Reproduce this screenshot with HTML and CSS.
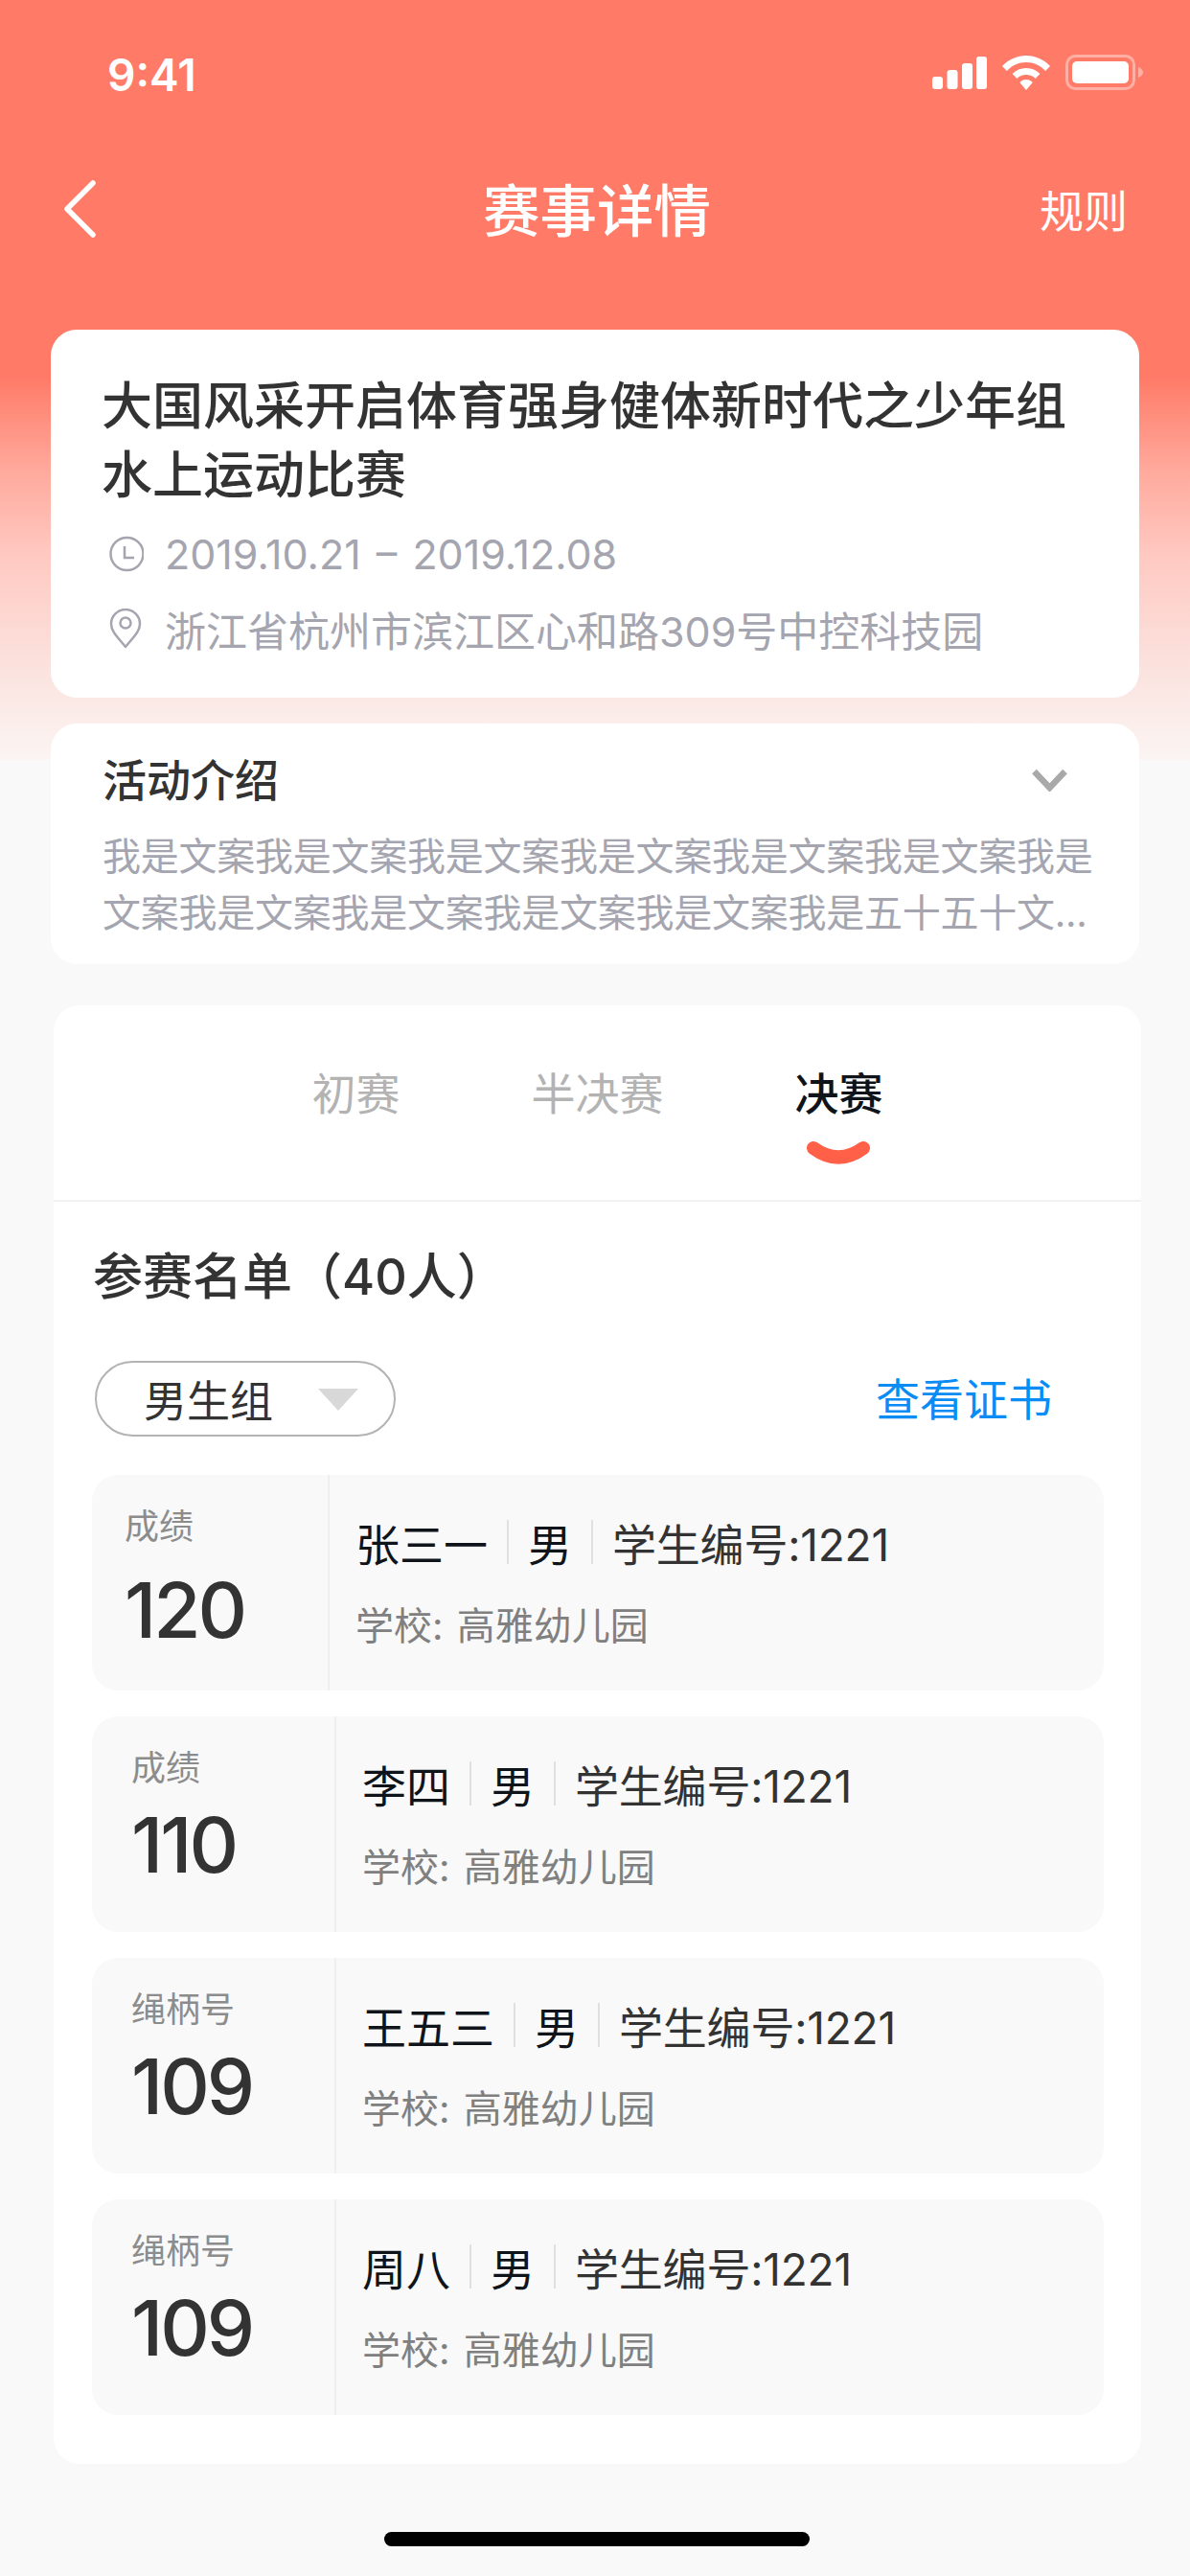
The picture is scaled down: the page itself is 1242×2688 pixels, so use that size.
FILE: index.html
```html
<!DOCTYPE html>
<html lang="zh">
<head>
<meta charset="utf-8">
<title>赛事详情</title>
<link rel="stylesheet" href="styles.css">
</head>
<body>
<div class="page">
  <div class="status">
    <span class="time">9:41</span>
    <div class="status-icons">
      <svg width="57" height="34" viewBox="0 0 57 34" class="signal"><rect x="0" y="21" width="11" height="13" rx="3"/><rect x="15.500" y="14" width="11" height="20" rx="3"/><rect x="31" y="7" width="11" height="27" rx="3"/><rect x="46" y="0" width="11" height="34" rx="3"/></svg>
      <svg width="50" height="36" viewBox="0 0 52 36" class="wifi" preserveAspectRatio="none"><path d="M26 0C16 0 7 4 0 11l5 5C11 10 18 7 26 7s15 3 21 9l5-5C45 4 36 0 26 0z"/><path d="M26 13c-6 0-11 2-15 6l5 5c3-3 6-4 10-4s7 1 10 4l5-5c-4-4-9-6-15-6z"/><path d="M26 25c-3 0-5 1-7 3l7 8 7-8c-2-2-4-3-7-3z"/></svg>
      <svg width="81" height="37" viewBox="0 0 81 37" class="battery"><rect x="1.500" y="1.500" width="70" height="34" rx="9" fill="none" stroke="#fff" stroke-opacity=".4" stroke-width="3"/><rect x="7" y="7" width="59" height="23" rx="5" fill="#fff"/><path d="M76 13c3 1 5 3 5 5.500s-2 4.500-5 5.500z" fill="#fff" fill-opacity=".4"/></svg>
    </div>
  </div>
  <header class="nav">
    <svg class="back" width="36" height="60" viewBox="0 0 36 60"><path d="M31 3 4 30l27 27" fill="none" stroke="#fff" stroke-width="5.500" stroke-linecap="round" stroke-linejoin="round"/></svg>
    <h1 class="nav-title">赛事详情</h1>
    <span class="nav-rule">规则</span>
  </header>

  <section class="card info">
    <h2 class="info-title">大国风采开启体育强身健体新时代之少年组<br>水上运动比赛</h2>
    <div class="meta meta-date">
      <svg width="38" height="38" viewBox="0 0 38 38" class="meta-icon"><circle cx="20.500" cy="19" r="17" fill="none" stroke="#a5a5b0" stroke-width="2.500"/><path d="M18 11v12h10" fill="none" stroke="#a5a5b0" stroke-width="2.500"/></svg>
      <span class="date-text">2019.10.21 – 2019.12.08</span>
    </div>
    <div class="meta">
      <svg width="38" height="42" viewBox="0 0 38 42" class="meta-icon"><path d="M19 40C11 30 4 24 4 16a15 15 0 0 1 30 0c0 8-7 14-15 24z" fill="none" stroke="#a5a5b0" stroke-width="2.500" stroke-linejoin="round"/><circle cx="19" cy="15" r="5.500" fill="none" stroke="#a5a5b0" stroke-width="2.500"/></svg>
      <span>浙江省杭州市滨江区心和路309号中控科技园</span>
    </div>
  </section>

  <section class="card intro">
    <div class="intro-head">
      <h3 class="intro-title">活动介绍</h3>
      <svg width="37" height="24" viewBox="0 0 37 24"><path d="M2.500 3l16 17 16-17" fill="none" stroke="#a9a9a9" stroke-width="6.500"/></svg>
    </div>
    <p class="intro-text">我是文案我是文案我是文案我是文案我是文案我是文案我是<br>文案我是文案我是文案我是文案我是文案我是五十五十文...</p>
  </section>

  <section class="panel">
    <div class="tabs">
      <span class="tab">初赛</span>
      <span class="tab">半决赛</span>
      <span class="tab tab-active">决赛
        <svg class="tab-mark" width="66" height="24" viewBox="0 0 66 24"><path d="M7 7Q33 26 59 7" fill="none" stroke="#ff6047" stroke-width="14" stroke-linecap="round"/></svg>
      </span>
    </div>
    <div class="panel-body">
      <h3 class="list-title">参赛名单（40人）</h3>
      <div class="filter">
        <div class="select"><span>男生组</span><i class="caret"></i></div>
        <a class="cert">查看证书</a>
      </div>
      <div class="rows">
        <div class="row">
          <div class="score"><span class="score-label">成绩</span><span class="score-num">120</span></div>
          <div class="person">
            <div class="person-line"><b>张三一</b><i></i><b>男</b><i></i><span class="person-id">学生编号:1221</span></div>
            <div class="school">学校: 高雅幼儿园</div>
          </div>
        </div>
        <div class="row row-wide">
          <div class="score"><span class="score-label">成绩</span><span class="score-num">110</span></div>
          <div class="person">
            <div class="person-line"><b>李四</b><i></i><b>男</b><i></i><span class="person-id">学生编号:1221</span></div>
            <div class="school">学校: 高雅幼儿园</div>
          </div>
        </div>
        <div class="row row-wide">
          <div class="score"><span class="score-label">绳柄号</span><span class="score-num">109</span></div>
          <div class="person">
            <div class="person-line"><b>王五三</b><i></i><b>男</b><i></i><span class="person-id">学生编号:1221</span></div>
            <div class="school">学校: 高雅幼儿园</div>
          </div>
        </div>
        <div class="row row-wide">
          <div class="score"><span class="score-label">绳柄号</span><span class="score-num">109</span></div>
          <div class="person">
            <div class="person-line"><b>周八</b><i></i><b>男</b><i></i><span class="person-id">学生编号:1221</span></div>
            <div class="school">学校: 高雅幼儿园</div>
          </div>
        </div>
      </div>
    </div>
  </section>
  <div class="home-bar"></div>
</div>
</body>
</html>
```
FILE: styles.css
```css
* { box-sizing: border-box; margin: 0; padding: 0; }
html, body { width: 1242px; height: 2688px; overflow: hidden; }
body {
  font-family: Inter, "Noto Sans CJK SC", "Noto Sans", sans-serif;
  background: #f9f9f9;
  color: #333;
}
.page {
  width: 1242px;
  height: 2688px;
  display: flex;
  flex-direction: column;
  align-items: flex-start;
  background: linear-gradient(#ff7b68 0, #ff7b68 395px, #ffa99c 490px, #ffc9c2 580px, #fbe3df 700px, #fbf5f3 793px, #f9f9f9 793px);
}
.status {
  width: 100%;
  height: 150px;
  padding: 54px 49px 0 112px;
  display: flex;
  justify-content: space-between;
  align-items: flex-start;
}
.time { font-size: 46px; line-height: 48px; font-weight: 600; color: #fff; }
.status-icons { display: flex; align-items: center; gap: 16px; padding-top: 3px; }
.signal, .wifi { fill: #fff; }
.nav {
  width: 100%;
  height: 194px;
  padding: 0 66px;
  display: flex;
  align-items: flex-start;
  justify-content: space-between;
  position: relative;
}
.back { margin-top: 38px; }
.nav-title {
  position: absolute;
  left: 4px;
  right: 0;
  top: 40px;
  text-align: center;
  font-size: 59.5px;
  line-height: 60px;
  font-weight: 500;
  color: #fff;
}
.nav-rule { font-size: 46px; line-height: 60px; color: #fff; margin-top: 40px; margin-right: -1px; }
.card { background: #fff; border-radius: 27px; margin-left: 53px; width: 1136px; }
.info { height: 384px; padding: 44px 54px 0 53px; }
.info-title { font-size: 53px; line-height: 72px; font-weight: 500; color: #333; margin-bottom: 11px; }
.meta {
  display: flex;
  align-items: center;
  gap: 22px;
  height: 80px;
  font-size: 43px;
  color: #a5a5b0;
  padding-left: 6px;
}
.meta-icon { flex: none; width: 38px; }
.meta-date { height: 70px; margin-bottom: 3px; }
.date-text { word-spacing: 4px; }
.intro { height: 251px; margin-top: 27px; padding: 29px 75px 0 54px; }
.intro-head { display: flex; justify-content: space-between; align-items: center; }
.intro-title { font-size: 46px; line-height: 60px; font-weight: 500; color: #333; }
.intro-text { font-size: 40px; line-height: 59px; color: #a5a5b0; margin-top: 20px; white-space: nowrap; letter-spacing: -0.25px; }
.panel {
  margin: 43px 0 0 56px;
  width: 1135px;
  height: 1522px;
  background: #fff;
  border-radius: 27px;
}
.tabs {
  height: 205px;
  border-bottom: 2px solid #f1f1f1;
  display: flex;
  justify-content: center;
  gap: 137px;
  padding-top: 62px;
}
.tab { font-size: 46px; line-height: 60px; color: #b3b3b3; position: relative; height: 60px; }
.tab-active { color: #0f141a; font-weight: 500; }
.tab-mark { position: absolute; left: 12px; top: 80px; }
.panel-body { padding: 0 40px; }
.list-title { font-size: 52px; line-height: 70px; font-weight: 500; color: #333; margin: 44px 0 0 1px; }
.filter { display: flex; justify-content: space-between; align-items: center; margin-top: 52px; padding: 0 53px 0 3px; }
.select {
  width: 314px;
  height: 79px;
  border: 2px solid #b3b3b3;
  border-radius: 40px;
  display: flex;
  align-items: center;
  padding-left: 49px;
  font-size: 45px;
  color: #333;
  gap: 47px;
}
.caret {
  width: 0;
  height: 0;
  border-left: 21px solid transparent;
  border-right: 21px solid transparent;
  border-top: 23px solid #d8d8d8;
  margin-top: 2px;
}
.cert { font-size: 46px; color: #0a8cf5; margin-bottom: 6px; }
.rows { display: flex; flex-direction: column; gap: 27px; margin-top: 40px; }
.row { height: 225px; width: 1056px; background: #f9f9f9; border-radius: 27px; display: flex; }
.score {
  width: 248px;
  flex: none;
  border-right: 2px solid #efefef;
  padding: 30px 0 0 34px;
  display: flex;
  flex-direction: column;
}
.row-wide .score { width: 255px; padding-left: 41px; }
.score-label { font-size: 36px; line-height: 48px; color: #8c8c8c; }
.score-num { font-size: 80px; line-height: 96px; font-weight: 500; color: #333; letter-spacing: -3px; margin-top: 15px; }
.row-wide .score-num { margin-top: 8px; }
.person { padding: 42px 0 0 27px; }
.person-line { display: flex; align-items: center; font-size: 46px; height: 56px; color: #333; }
.person-line b { font-weight: 400; color: #0f141a; }
.person-line i { width: 2px; height: 46px; background: #e0e0e0; margin: 0 20px; }
.person-id { letter-spacing: -0.2px; }
.school { font-size: 40px; line-height: 56px; color: #808080; margin-top: 32px; word-spacing: 3px; }
.home-bar {
  position: absolute;
  left: 401px;
  top: 2642px;
  width: 444px;
  height: 15px;
  border-radius: 8px;
  background: #000;
}
```
